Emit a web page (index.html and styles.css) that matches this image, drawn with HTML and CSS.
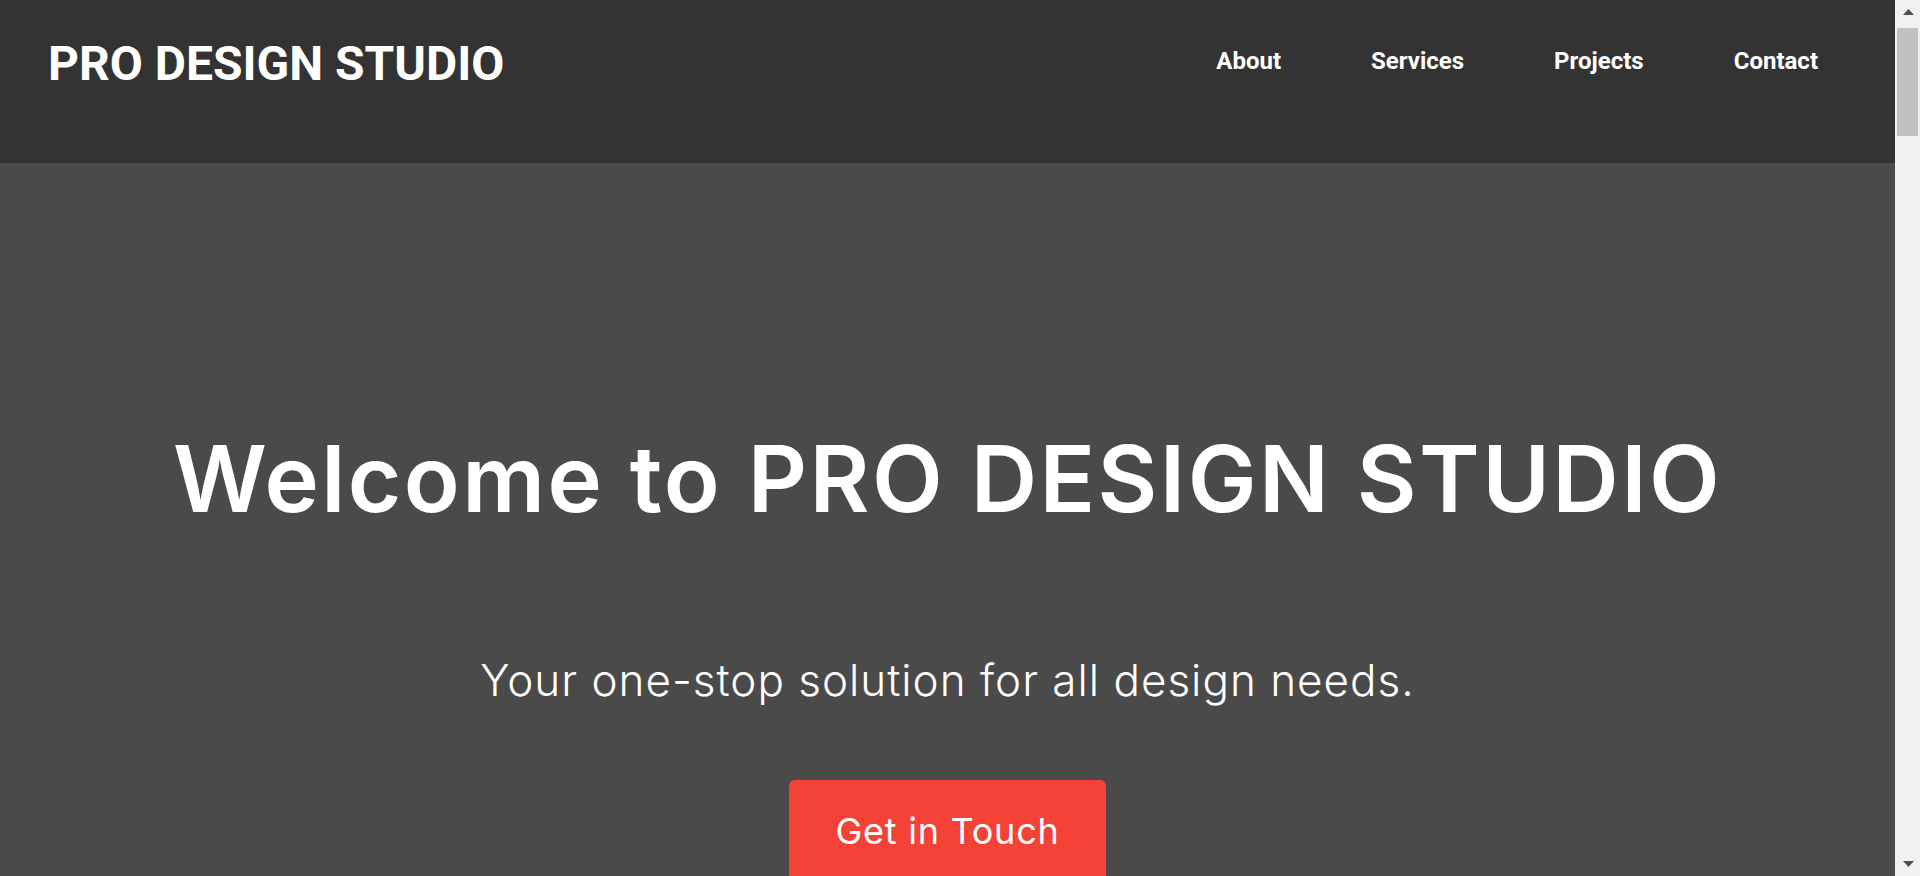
FILE: index.html
```html
<!DOCTYPE html>
<html lang="en">
<head>
<meta charset="utf-8">
<title>PRO DESIGN STUDIO</title>
<link rel="stylesheet" href="styles.css">
</head>
<body>
<div class="page">
  <header class="site-header">
    <h1 class="logo">PRO DESIGN STUDIO</h1>
    <nav class="nav">
      <a class="nav-link" href="#about">About</a>
      <a class="nav-link" href="#services">Services</a>
      <a class="nav-link" href="#projects">Projects</a>
      <a class="nav-link" href="#contact">Contact</a>
    </nav>
  </header>
  <section class="hero">
    <h2 class="hero-title">Welcome to PRO DESIGN STUDIO</h2>
    <p class="hero-sub">Your one-stop solution for all design needs.</p>
    <a class="hero-btn" href="#contact">Get in Touch</a>
  </section>
</div>
<div class="scrollbar" aria-hidden="true">
  <div class="sb-btn sb-up">
    <svg width="11" height="6" viewBox="0 0 11 6"><polygon points="5.5,0 11,6 0,6" fill="#505050"/></svg>
  </div>
  <div class="sb-thumb"></div>
  <div class="sb-track"></div>
  <div class="sb-btn sb-down">
    <svg width="11" height="6" viewBox="0 0 11 6"><polygon points="0,0 11,0 5.5,6" fill="#505050"/></svg>
  </div>
</div>
</body>
</html>
```
FILE: styles.css
```css
html, body {
  margin: 0;
  padding: 0;
}
body {
  display: flex;
  height: 100vh;
  overflow: hidden;
  background: #4a4a4a;
  color: #fff;
  font-family: Roboto, "Liberation Sans", sans-serif;
}
.page {
  flex: 1;
  min-width: 0;
  overflow: hidden;
  background: #4a4a4a;
}
.scrollbar {
  flex: 0 0 25px;
  display: flex;
  flex-direction: column;
  background: #f1f1f1;
}
.sb-btn {
  height: 25px;
  display: flex;
  justify-content: center;
  box-sizing: border-box;
}
.sb-btn svg {
  display: block;
  margin-left: 1px;
}
.sb-up {
  padding-top: 9px;
}
.sb-down {
  padding-top: 10px;
}
.sb-thumb {
  height: 108px;
  margin: 3px 2px 0;
  background: #c1c1c1;
}
.sb-track {
  flex: 1;
}
.site-header {
  display: flex;
  justify-content: space-between;
  align-items: flex-start;
  box-sizing: border-box;
  height: 163px;
  padding: 40px 77px 0 48px;
  background: #333333;
}
.logo {
  margin: 0;
  font-family: Roboto, sans-serif;
  font-weight: 700;
  font-size: 48px;
  line-height: 1;
}
.nav {
  display: flex;
  gap: 90px;
  padding-top: 9px;
}
.nav-link {
  color: #fff;
  text-decoration: none;
  font-family: Roboto, sans-serif;
  font-weight: 700;
  font-size: 24px;
  line-height: 1;
}
.hero {
  display: flex;
  flex-direction: column;
  align-items: center;
  min-height: 100vh;
  padding-top: 270px;
  box-sizing: border-box;
  background: #4a4a4a;
  text-align: center;
  font-family: Inter, "Noto Sans", sans-serif;
}
.hero-title {
  margin: 0;
  font-weight: 600;
  font-size: 92px;
  line-height: 1;
  letter-spacing: 2.4px;
}
.hero-sub {
  margin: 133px 0 0;
  font-weight: 300;
  font-size: 44px;
  line-height: 1;
  letter-spacing: 1px;
}
.hero-btn {
  margin-top: 78px;
  padding: 33px 46px;
  background: #f44336;
  color: #fff;
  border-radius: 6px;
  text-decoration: none;
  font-weight: 400;
  font-size: 36px;
  line-height: 1;
  letter-spacing: 0.75px;
}
```
